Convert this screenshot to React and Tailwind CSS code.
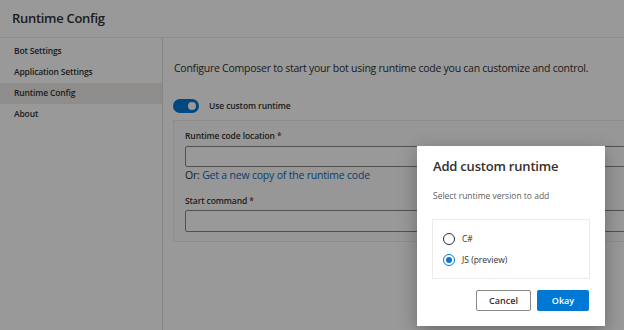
import React from "react";

const font = { fontFamily: '"Open Sans", "Noto Sans", sans-serif' };

export default function App() {
  return (
    <div className="relative w-[624px] h-[330px] overflow-hidden bg-white text-[#323130]" style={font}>
      <div className="flex flex-col h-full">
        <div className="h-[38px] shrink-0 border-b border-[#edebe9] flex items-center pl-[12px]">
          <span className="text-[13px] font-semibold tracking-[-0.3px]">Runtime Config</span>
        </div>
        <div className="flex flex-1 min-h-0">
          <div className="w-[163px] shrink-0 border-r border-[#e1dfdd] pt-[3px] text-[8.5px] font-semibold tracking-[-0.15px]">
            <div className="h-[21px] flex items-center pl-[14px]">Bot Settings</div>
            <div className="h-[21px] flex items-center pl-[14px]">Application Settings</div>
            <div className="h-[21px] flex items-center pl-[14px] bg-[#edebe9]">Runtime Config</div>
            <div className="h-[21px] flex items-center pl-[14px]">About</div>
          </div>
          <div className="flex-1 min-w-0 pl-[10px] pt-[20px]">
            <div className="pl-[1px] text-[10.5px] tracking-[-0.25px] whitespace-nowrap leading-[20px]">
              Configure Composer to start your bot using runtime code you can customize and control.
            </div>
            <div className="flex items-center mt-[21px] h-[14px]">
              <div className="w-[26px] h-[14px] rounded-full bg-[#0078d4] flex items-center justify-end pr-[3px]">
                <div className="w-[8px] h-[8px] rounded-full bg-white" />
              </div>
              <span className="ml-[10px] text-[8.5px] font-semibold tracking-[-0.1px]">Use custom runtime</span>
            </div>
            <div className="mt-[7px] w-[520px] h-[122px] border border-[#edebe9] bg-[#fcfcfc] px-[11px] pt-[8px]">
              <div className="text-[8.5px] font-semibold tracking-[-0.1px] leading-[14px]">
                Runtime code location <span className="text-[#a4262c]">*</span>
              </div>
              <div className="mt-[3px] h-[21px] border border-[#8a8886] rounded-[2px] bg-white" />
              <div className="text-[10.5px] tracking-[-0.2px] leading-[16px]">
                Or: <span className="text-[#0b6ab8]">Get a new copy of the runtime code</span>
              </div>
              <div className="text-[8.5px] font-semibold tracking-[-0.1px] leading-[14px] mt-[11px]">
                Start command <span className="text-[#a4262c]">*</span>
              </div>
              <div className="mt-[2px] h-[22px] border border-[#8a8886] rounded-[2px] bg-white" />
            </div>
          </div>
        </div>
      </div>

      <div className="absolute inset-0 bg-black/40" />

      <div className="absolute left-[417px] top-[146px] w-[188px] h-[180px] bg-white shadow-[0_6px_18px_rgba(0,0,0,0.3)] px-[16px] pt-[10px]">
        <div className="text-[13px] font-semibold tracking-[-0.2px] leading-[20px]">Add custom runtime</div>
        <div className="mt-[13px] text-[8.5px] text-[#605e5c] leading-[14px]">Select runtime version to add</div>
        <div className="mt-[16px] w-[158px] h-[60px] border border-[#edebe9] -ml-[1px] pl-[10px] pt-[12px]">
          <div className="flex items-center h-[14px]">
            <div className="w-[12px] h-[12px] rounded-full border border-[#323130] bg-white" />
            <span className="ml-[7px] text-[8.5px] leading-[14px]">C#</span>
          </div>
          <div className="flex items-center h-[14px] mt-[7px]">
            <div className="w-[12px] h-[12px] rounded-full border border-[#0078d4] bg-white flex items-center justify-center">
              <div className="w-[6px] h-[6px] rounded-full bg-[#0078d4]" />
            </div>
            <span className="ml-[7px] text-[8.5px] leading-[14px]">JS (preview)</span>
          </div>
        </div>
        <div className="mt-[11px] flex justify-end gap-[6px]">
          <button className="w-[55px] h-[21px] border border-[#8a8886] rounded-[2px] bg-white text-[9px] font-semibold text-[#323130]">Cancel</button>
          <button className="w-[52px] h-[21px] rounded-[2px] bg-[#0078d4] text-[9px] font-semibold text-white">Okay</button>
        </div>
      </div>
    </div>
  );
}
